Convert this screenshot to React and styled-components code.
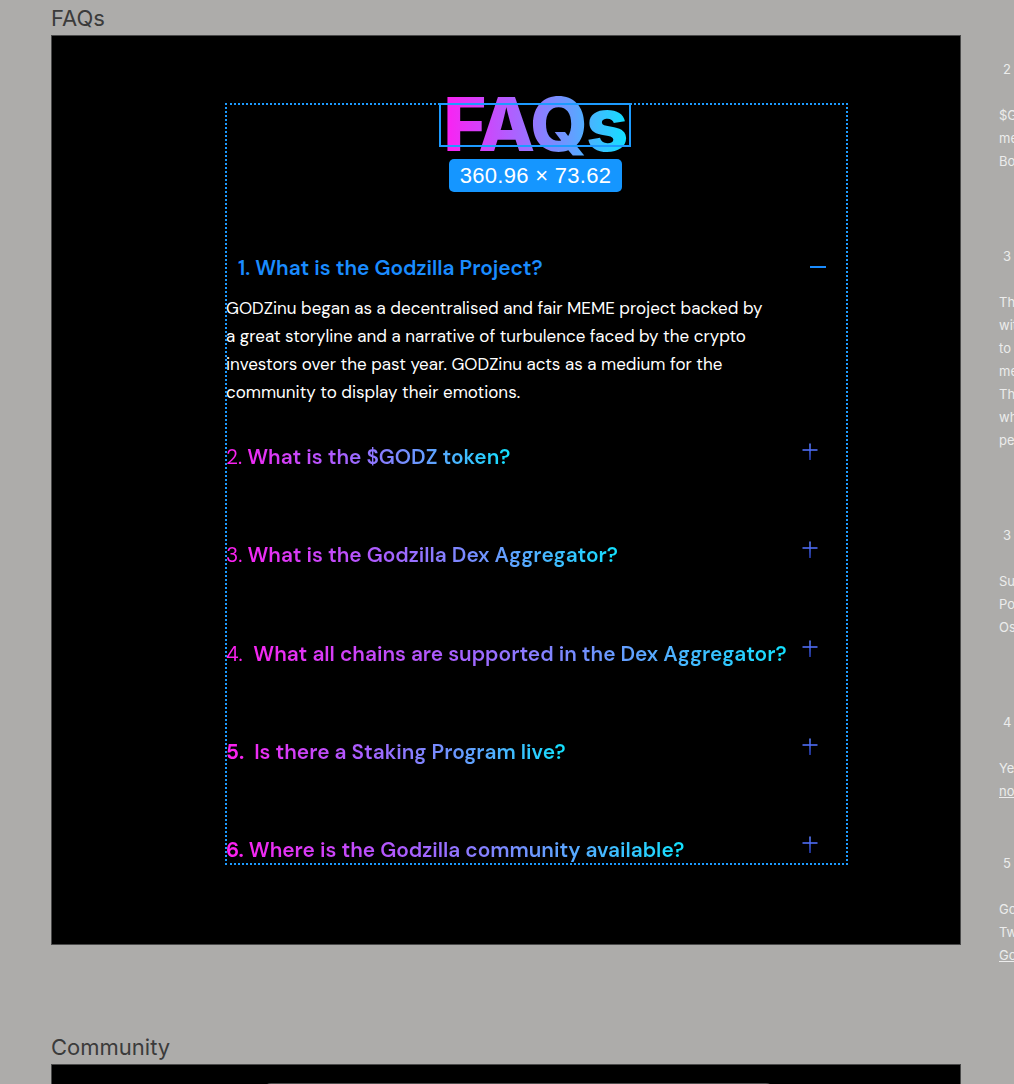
import React from 'react'
import styled, { createGlobalStyle } from 'styled-components'

const GlobalStyle = createGlobalStyle`
    html, body {
        margin: 0;
        padding: 0;
        background: #adacaa;
        overflow: hidden;
    }
`

const faqs = [
    {
        num: '1.',
        question: 'What is the Godzilla Project?',
        open: true,
        answer: 'GODZinu began as a decentralised and fair MEME project backed by a great storyline and a narrative of turbulence faced by the crypto investors over the past year. GODZinu acts as a medium for the community to display their emotions.',
    },
    { num: '2.', question: 'What is the $GODZ token?', numWeight: 400 },
    { num: '3.', question: 'What is the Godzilla Dex Aggregator?', numWeight: 400 },
    { num: '4.\u00a0', question: 'What all chains are supported in the Dex Aggregator?', numWeight: 400 },
    { num: '5.\u00a0', question: 'Is there a Staking Program live?', numWeight: 700 },
    { num: '6.', question: 'Where is the Godzilla community available?', numWeight: 700 },
]

const sideItems = [
    {
        num: '2',
        head: 'What is the $GODZ token?',
        lines: [
            '$GODZ is the native token of the Godzilla ecosystem',
            'meme token that powers the Dex Aggregator',
            'Both utility and community driven.',
        ],
    },
    {
        num: '3',
        head: 'What is the Godzilla Dex Aggregator?',
        lines: [
            'The Godzilla Dex Aggregator is a platform',
            'with the best routes across exchanges',
            'to give users the best prices on swaps',
            'meaning lower slippage and fees.',
            'The aggregator sources liquidity',
            'which ensures efficient trades',
            'performed at the best rates.',
        ],
    },
    {
        num: '3',
        head: 'What all chains are supported?',
        lines: [
            'Supported chains are Ethereum, BSC,',
            'Polygon, Avalanche, Fantom and',
            'Osmosis.',
        ],
    },
    {
        num: '4',
        head: 'Is there a Staking Program live?',
        lines: ['Yes, the staking program is live'],
        link: 'now',
        gapAfter: 52,
    },
    {
        num: '5',
        head: 'Where is the Godzilla community available?',
        lines: ['Godzilla community is available on Telegram,', 'Twitter, Discord and'],
        link: 'Godzilla website',
    },
]

function PlusIcon() {
    return (
        <svg width="16" height="18" viewBox="0 0 16 18">
            <defs>
                <linearGradient id="plusV" gradientUnits="userSpaceOnUse" x1="0" y1="0" x2="0" y2="18">
                    <stop offset="0" stopColor="#5a7dff" />
                    <stop offset="1" stopColor="#2338b0" />
                </linearGradient>
            </defs>
            <line x1="8" y1="0.5" x2="8" y2="17" stroke="url(#plusV)" strokeWidth="1.6" />
            <line x1="0.5" y1="7" x2="15.5" y2="7" stroke="#4f6df5" strokeWidth="1.6" />
        </svg>
    )
}

function MinusIcon() {
    return (
        <svg width="16" height="4" viewBox="0 0 16 4">
            <line x1="0" y1="2" x2="16" y2="2" stroke="#1a8cff" strokeWidth="2" />
        </svg>
    )
}

function App() {
    return (
        <>
            <GlobalStyle />
            <Page>
                <MainColumn>
                    <SectionLabel>FAQs</SectionLabel>
                    <Frame>
                        <FaqColumn>
                            <TitleBlock>
                                <TitleWrap>
                                    <Title>FAQs</Title>
                                    <SelectBox />
                                </TitleWrap>
                                <SizeBadge>360.96 × 73.62</SizeBadge>
                            </TitleBlock>

                            {faqs.map((f, i) => (
                                <FaqItem key={i} $open={f.open} $last={i === faqs.length - 1}>
                                    <QuestionRow $open={f.open}>
                                        {f.open ? (
                                            <OpenQuestion>{f.num} {f.question}</OpenQuestion>
                                        ) : (
                                            <GradientQuestion>
                                                <Num $weight={f.numWeight}>{f.num}</Num> {f.question}
                                            </GradientQuestion>
                                        )}
                                        <IconSlot $open={f.open}>
                                            {f.open ? <MinusIcon /> : <PlusIcon />}
                                        </IconSlot>
                                    </QuestionRow>
                                    {f.open && <Answer>{f.answer}</Answer>}
                                </FaqItem>
                            ))}
                        </FaqColumn>
                    </Frame>

                    <SectionLabel $top>Community</SectionLabel>
                    <Frame $short>
                        <CommunityCard />
                    </Frame>
                </MainColumn>

                <SideColumn>
                    {sideItems.map((s, i) => (
                        <SideItem key={i} $gap={s.gapAfter}>
                            <SideHead>
                                <span>{s.num}</span>
                                <span>{s.head}</span>
                            </SideHead>
                            <SideBody>
                                {s.lines.map((l, j) => (
                                    <SideLine key={j}>{l}</SideLine>
                                ))}
                                {s.link && <SideLink>{s.link}</SideLink>}
                            </SideBody>
                        </SideItem>
                    ))}
                </SideColumn>
            </Page>
        </>
    )
}

export default App

const Page = styled.div`
    width: 1014px;
    height: 1084px;
    overflow: hidden;
    display: flex;
    flex-direction: row;
    gap: 38px;
    padding: 4px 0 0 51px;
    box-sizing: border-box;
`

const MainColumn = styled.div`
    width: 910px;
    flex-shrink: 0;
    display: flex;
    flex-direction: column;
`

const SectionLabel = styled.div`
    font-family: Inter, "Liberation Sans", sans-serif;
    font-size: 22px;
    line-height: 29px;
    color: #3b3b3b;
    margin-top: ${p => (p.$top ? '88px' : '0')};
    margin-bottom: 2px;
`

const Frame = styled.div`
    background: #000;
    border: 1px solid #4a4a4a;
    height: ${p => (p.$short ? '200px' : '910px')};
    box-sizing: border-box;
    flex-shrink: 0;
    display: flex;
    flex-direction: column;
    align-items: flex-start;
`

const FaqColumn = styled.div`
    position: relative;
    width: 621px;
    margin-top: 68px;
    margin-left: 174px;
    outline: 2px dotted #1d9bff;
    outline-offset: -1px;
    display: flex;
    flex-direction: column;
`

const TitleBlock = styled.div`
    height: 150px;
    display: flex;
    flex-direction: column;
    align-items: center;
`

const TitleWrap = styled.div`
    position: relative;
    margin-top: -17px;
    margin-left: -1px;
`

const Title = styled.div`
    font-family: Inter, "Liberation Sans", Arial, sans-serif;
    font-weight: 800;
    font-size: 74px;
    line-height: 74px;
    letter-spacing: -1.8px;
    padding-right: 2px;
    background: linear-gradient(90deg, #ff1ef2 0%, #b35cff 35%, #6f95ff 65%, #0fe3ff 100%);
    -webkit-background-clip: text;
    background-clip: text;
    color: transparent;
`

const SelectBox = styled.div`
    position: absolute;
    left: -4px;
    right: -2px;
    top: 16px;
    height: 40px;
    border: 2px solid #1d9bff;
`

const SizeBadge = styled.div`
    margin-top: -2px;
    margin-left: -2px;
    padding: 0 11px;
    height: 33px;
    line-height: 34px;
    background: #1596ff;
    border-radius: 5px;
    color: #fff;
    font-family: "Liberation Sans", Arial, sans-serif;
    font-size: 22px;
    letter-spacing: 0.3px;
`

const FaqItem = styled.div`
    display: flex;
    flex-direction: column;
    padding-bottom: ${p => (p.$last ? '0' : p.$open ? '37px' : '70.3px')};
`

const QuestionRow = styled.div`
    display: flex;
    flex-direction: row;
    justify-content: space-between;
    align-items: center;
    height: 28px;
    padding-left: ${p => (p.$open ? '12px' : '0')};
`

const questionFont = `
    font-family: "DM Sans", Inter, "Noto Sans", sans-serif;
    font-size: 20.8px;
    font-weight: 600;
    line-height: 28px;
    white-space: nowrap;
`

const OpenQuestion = styled.span`
    ${questionFont}
    color: #1a8cff;
`

const GradientQuestion = styled.span`
    ${questionFont}
    display: inline-block;
    background: linear-gradient(90deg, #ff1ef0 0%, #a95fff 40%, #5aa7ff 75%, #12e2ff 100%);
    -webkit-background-clip: text;
    background-clip: text;
    color: transparent;
`

const Num = styled.span`
    font-weight: ${p => p.$weight};
`

const IconSlot = styled.div`
    display: flex;
    align-items: center;
    margin-right: ${p => (p.$open ? '21px' : '29px')};
    margin-top: ${p => (p.$open ? '-2px' : '-10px')};
`

const Answer = styled.p`
    margin: 12px 0 0 0;
    width: 545px;
    font-family: "DM Sans", Inter, "Noto Sans", sans-serif;
    font-size: 17px;
    line-height: 28px;
    color: #fff;
`

const CommunityCard = styled.div`
    margin: 18px 0 0 211px;
    width: 507px;
    height: 60px;
    border: 2px solid #4c4c4c;
    border-radius: 8px;
`

const SideColumn = styled.div`
    width: 320px;
    flex-shrink: 0;
    padding-top: 57px;
    display: flex;
    flex-direction: column;
    font-family: Inter, "Liberation Sans", sans-serif;
    color: #ececec;
`

const SideItem = styled.div`
    display: flex;
    flex-direction: column;
    margin-bottom: ${p => (p.$gap ? `${p.$gap}px` : '75px')};
`

const SideHead = styled.div`
    display: flex;
    gap: 14px;
    font-size: 13px;
    line-height: 16px;
    padding-left: 4px;
    white-space: nowrap;
`

const SideBody = styled.div`
    margin-top: 27px;
    display: flex;
    flex-direction: column;
`

const SideLine = styled.span`
    font-size: 13px;
    line-height: 23px;
    white-space: nowrap;
`

const SideLink = styled(SideLine)`
    text-decoration: underline;
`
